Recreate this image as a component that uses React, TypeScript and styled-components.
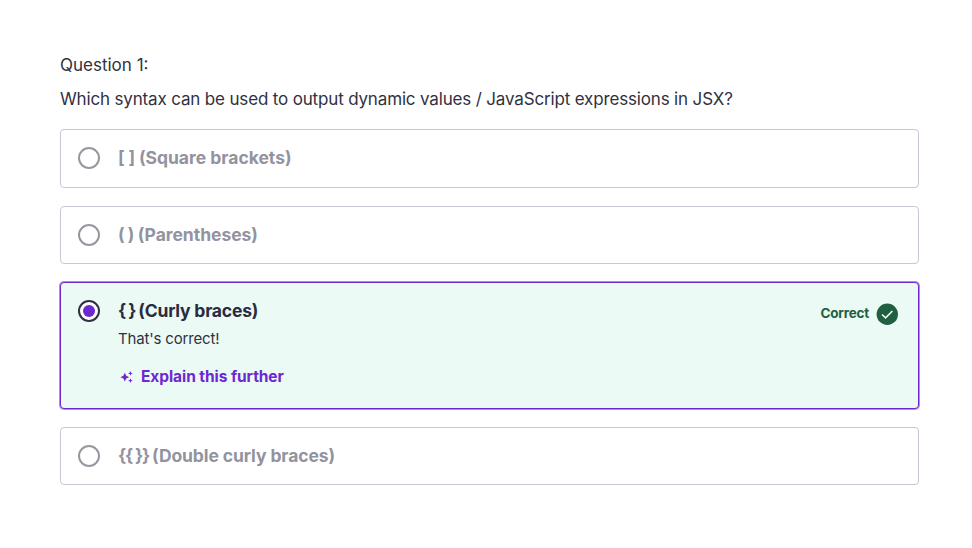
import React from "react";
import styled, { createGlobalStyle, css } from "styled-components";

const GlobalStyle = createGlobalStyle`
  * { box-sizing: border-box; }
  body { margin: 0; background: #fff; color: #303141; font-family: Inter, "Liberation Sans", sans-serif; }
  p { margin: 0; }
`;

const Quiz = styled.main`
  padding: 48px 53px 0 60px;
`;

const Line = styled.p<{ $spacing: number }>`
  height: 34px;
  line-height: 35px;
  font-size: 17px;
  letter-spacing: ${(p) => p.$spacing}px;
  white-space: nowrap;
`;

const Options = styled.div`
  display: flex;
  flex-direction: column;
  gap: 18px;
  margin-top: 13px;
`;

const Option = styled.label<{ $height: number; $selected?: boolean }>`
  display: flex;
  align-items: flex-start;
  height: ${(p) => p.$height}px;
  padding: 17px 20px 0 17px;
  border: 1px solid #c7c7d5;
  border-radius: 4px;
  color: #93939f;
  ${(p) =>
    p.$selected &&
    css`
      color: #2a2b3f;
      background: #ebfaf5;
      border-color: #6d28d2;
      box-shadow: 0 0 0 1px #b18be7;
    `}
`;

const Radio = styled.span<{ $selected?: boolean }>`
  display: grid;
  place-items: center;
  flex: none;
  width: 22px;
  height: 22px;
  margin-right: 18px;
  border: 2px solid ${(p) => (p.$selected ? "#303141" : "#9797a0")};
  border-radius: 50%;
  background: #fff;
`;

const Dot = styled.span`
  width: 12px;
  height: 12px;
  border-radius: 50%;
  background: #6d28d2;
`;

const Body = styled.div`
  flex: 1;
`;

const Answer = styled.p<{ $spacing: number }>`
  font-size: 17.5px;
  line-height: 22px;
  font-weight: 700;
  letter-spacing: ${(p) => p.$spacing}px;
  white-space: nowrap;
`;

const Symbol = styled.span<{ $spacing: number }>`
  letter-spacing: ${(p) => p.$spacing}px;
`;

const Feedback = styled.p`
  margin-top: 6px;
  font-size: 15px;
  line-height: 21px;
  letter-spacing: -0.17px;
  color: #303141;
`;

const Explain = styled.div`
  display: flex;
  align-items: center;
  gap: 8px;
  margin-top: 17px;
  padding-left: 2px;
  color: #6d28d2;
  font-size: 15.5px;
  line-height: 22px;
  font-weight: 700;
  letter-spacing: -0.07px;
  white-space: nowrap;
`;

const Verdict = styled.div`
  display: flex;
  align-items: center;
  gap: 7px;
  margin-top: 1px;
  color: #206040;
  font-size: 13.5px;
  line-height: 22px;
  font-weight: 700;
  letter-spacing: -0.2px;
`;

const Sparkles = () => (
  <svg width="13" height="14" viewBox="0 0 13 14" fill="currentColor">
    <path d="M4.8 2.8 6.2 5.8 9.2 7.2 6.2 8.6 4.8 11.6 3.4 8.6.4 7.2 3.4 5.8Z" />
    <path d="M10.4 1 11.1 2.7 12.8 3.4 11.1 4.1 10.4 5.8 9.7 4.1 8 3.4 9.7 2.7Z" />
    <path d="M10.4 8.2 11.1 9.9 12.8 10.6 11.1 11.3 10.4 13 9.7 11.3 8 10.6 9.7 9.9Z" />
  </svg>
);

const CheckIcon = styled.svg`
  margin-top: 2px;
`;

const Check = () => (
  <CheckIcon width="22" height="22" viewBox="0 0 22 22">
    <circle cx="11.3" cy="11.3" r="10.7" fill="#206040" />
    <path d="M6 11.5 9.6 14.9 16.4 8" fill="none" stroke="#ebfaf5" strokeWidth="1.6" />
  </CheckIcon>
);

const answers = [
  { symbol: "[ ] ", text: "(Square brackets)", height: 59, symbolSpacing: -0.15, spacing: 0 },
  { symbol: "( ) ", text: "(Parentheses)", height: 58, symbolSpacing: -0.45, spacing: -0.03 },
  { symbol: "{ } ", text: "(Curly braces)", height: 127, symbolSpacing: -1.1, spacing: -0.2, correct: true },
  { symbol: "{{ }} ", text: "(Double curly braces)", height: 58, symbolSpacing: -1.17, spacing: -0.1 },
];

export default function App() {
  return (
    <>
      <GlobalStyle />
      <Quiz>
        <Line $spacing={0}>Question 1:</Line>
        <Line $spacing={-0.16}>
          Which syntax can be used to output dynamic values / JavaScript expressions in JSX?
        </Line>
        <Options>
          {answers.map((a) => (
            <Option key={a.text} $height={a.height} $selected={a.correct}>
              <Radio $selected={a.correct}>{a.correct && <Dot />}</Radio>
              <Body>
                <Answer $spacing={a.spacing}>
                  <Symbol $spacing={a.symbolSpacing}>{a.symbol}</Symbol>
                  {a.text}
                </Answer>
                {a.correct && (
                  <>
                    <Feedback>That's correct!</Feedback>
                    <Explain>
                      <Sparkles />
                      Explain this further
                    </Explain>
                  </>
                )}
              </Body>
              {a.correct && (
                <Verdict>
                  Correct
                  <Check />
                </Verdict>
              )}
            </Option>
          ))}
        </Options>
      </Quiz>
    </>
  );
}
